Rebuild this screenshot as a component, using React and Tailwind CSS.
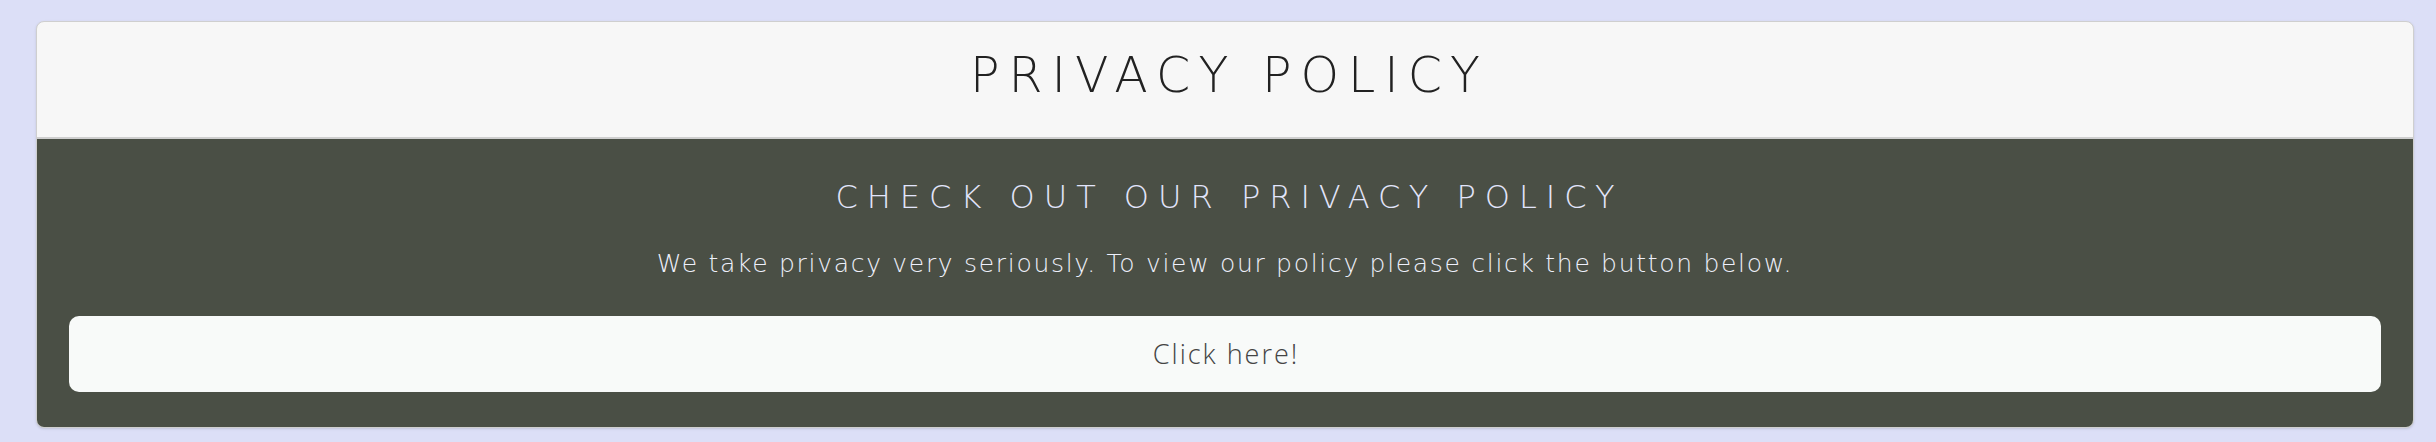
export default function App() {
  return (
    <div className="min-h-[442px] w-full bg-[#dcdff7] pt-[21px] pl-[36px] pr-[22px] pb-[18px]">
      <div className="overflow-hidden rounded-[8px] border border-[#cfcfcf] bg-[#f7f7f7] shadow-sm">
        {/* Header */}
        <div className="flex h-[117px] items-start justify-center border-b-2 border-[#cfcfcf] pt-[26px]">
          <h1
            className="pl-[9px] text-[49px] leading-[56px] font-extralight tracking-[9px] text-[#222]"
            style={{ fontFamily: '"DejaVu Sans", sans-serif' }}
          >
            PRIVACY POLICY
          </h1>
        </div>

        {/* Body */}
        <div className="flex flex-col items-center bg-[#4a4f45] px-[32px] pt-[38px] pb-[35px]">
          <h2
            className="pl-[9px] text-[32px] leading-[40px] font-extralight tracking-[9px] text-[#e2e5fb]"
            style={{ fontFamily: '"DejaVu Sans", sans-serif' }}
          >
            CHECK OUT OUR PRIVACY POLICY
          </h2>
          <p
            className="mt-[31px] text-[25px] leading-[32px] font-extralight tracking-[1.7px] text-[#eef0fb]"
            style={{ fontFamily: '"DejaVu Sans", sans-serif' }}
          >
            We take privacy very seriously. To view our policy please click the button below.
          </p>
          <button
            className="mt-[36px] flex h-[76px] w-full items-center justify-center rounded-[10px] bg-[#f8faf9] pl-[2px] text-[27px] font-light tracking-[2px] text-[#444]"
            style={{ fontFamily: '"Open Sans", sans-serif' }}
          >
            Click here!
          </button>
        </div>
      </div>
    </div>
  );
}
